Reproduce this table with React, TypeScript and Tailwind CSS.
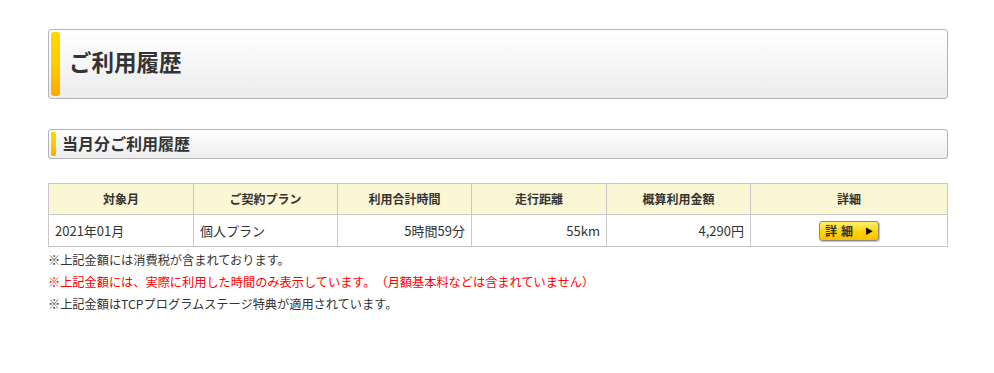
import React from "react";

const font = { fontFamily: '"Noto Sans CJK JP", "Noto Sans", sans-serif' };

export default function App() {
  return (
    <div className="w-[994px] h-[373px] bg-white text-[#333] [text-spacing-trim:space-all]" style={font}>
      <div className="pt-[29px] pl-[48px] w-[948px]">
        {/* Title */}
        <div className="h-[70px] border border-[#b4b4b4] rounded-[3px] bg-gradient-to-b from-white to-[#ececec] flex items-stretch p-[2px]">
          <div className="w-[9px] rounded-[3px] bg-gradient-to-b from-[#ffd800] via-[#ffcc00] to-[#ffa800]" />
          <div className="flex items-center pl-[9px] text-[22.5px] font-bold text-[#333] leading-none pb-[6px]">ご利用履歴</div>
        </div>

        {/* Sub heading */}
        <div className="mt-[30px] h-[30px] border border-[#b4b4b4] rounded-[3px] bg-gradient-to-b from-white to-[#ececec] flex items-stretch p-[2px]">
          <div className="w-[5px] rounded-[2px] bg-gradient-to-b from-[#ffd800] via-[#ffcc00] to-[#ffa800]" />
          <div className="flex items-center pl-[6px] text-[16px] font-bold text-[#333] leading-none pb-[3px]">当月分ご利用履歴</div>
        </div>

        {/* Table */}
        <table className="mt-[24px] w-[900px] border-collapse text-[12px] text-[#333]">
          <thead>
            <tr className="h-[31px] bg-[#fbf6d3]">
              <th className="w-[145px] border border-[#c8c8c8] font-bold">対象月</th>
              <th className="w-[144px] border border-[#c8c8c8] font-bold">ご契約プラン</th>
              <th className="w-[134px] border border-[#c8c8c8] font-bold">利用合計時間</th>
              <th className="w-[135px] border border-[#c8c8c8] font-bold">走行距離</th>
              <th className="w-[144px] border border-[#c8c8c8] font-bold">概算利用金額</th>
              <th className="border border-[#c8c8c8] font-bold">詳細</th>
            </tr>
          </thead>
          <tbody>
            <tr className="h-[32px] text-[13px]">
              <td className="border border-[#c8c8c8] px-[6px]">2021年01月</td>
              <td className="border border-[#c8c8c8] px-[6px]">個人プラン</td>
              <td className="border border-[#c8c8c8] px-[6px] text-right">5時間59分</td>
              <td className="border border-[#c8c8c8] px-[6px] text-right">55km</td>
              <td className="border border-[#c8c8c8] px-[6px] text-right">4,290円</td>
              <td className="border border-[#c8c8c8] text-center">
                <button className="inline-flex items-center justify-center gap-[8px] w-[60px] h-[20px] rounded-[3px] border border-[#8a8a8a] bg-gradient-to-b from-[#fff066] via-[#ffd400] to-[#ffc000] shadow-[1px_1px_1px_rgba(0,0,0,0.25)] text-[12px] font-bold text-[#333] leading-none">
                  <span className="tracking-[4px]">詳細</span>
                  <span className="text-[8px] text-black">▶</span>
                </button>
              </td>
            </tr>
          </tbody>
        </table>

        <div className="mt-[2px] text-[12.2px] leading-[22px]">
          <p>※上記金額には消費税が含まれております。</p>
          <p className="text-[#ff0000]">※上記金額には、実際に利用した時間のみ表示しています。（月額基本料などは含まれていません）</p>
          <p>※上記金額はTCPプログラムステージ特典が適用されています。</p>
        </div>
      </div>
    </div>
  );
}
